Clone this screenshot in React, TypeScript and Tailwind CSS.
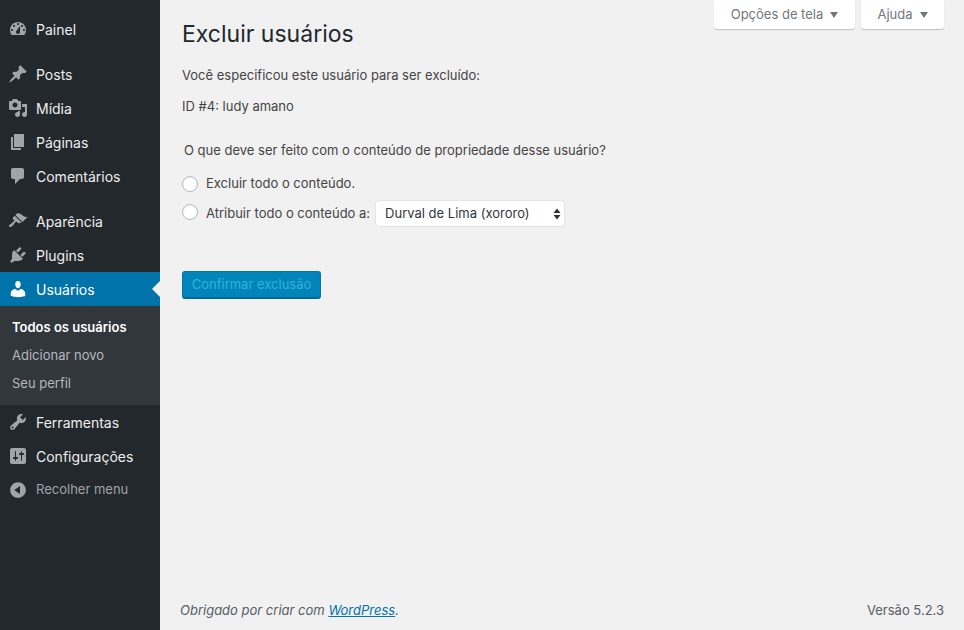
const ICONS: Record<string, string> = {
  dashboard: 'M3.76 16h12.48c1.1-1.37 1.76-3.11 1.76-5 0-4.42-3.58-8-8-8s-8 3.58-8 8c0 1.89.66 3.63 1.76 5zM10 4c.55 0 1 .45 1 1s-.45 1-1 1-1-.45-1-1 .45-1 1-1zM6 6c.55 0 1 .45 1 1s-.45 1-1 1-1-.45-1-1 .45-1 1-1zm8 0c.55 0 1 .45 1 1s-.45 1-1 1-1-.45-1-1 .45-1 1-1zm-5.37 5.55L12 7v6c0 1.1-.9 2-2 2s-2-.9-2-2c0-.57.24-1.08.63-1.45zM4 10c.55 0 1 .45 1 1s-.45 1-1 1-1-.45-1-1 .45-1 1-1zm12 0c.55 0 1 .45 1 1s-.45 1-1 1-1-.45-1-1 .45-1 1-1z',
  post: 'M10.44 3.02l1.82-1.82 6.36 6.35-1.83 1.82c-1.05-.68-2.48-.57-3.41.36l-.75.75c-.92.93-1.04 2.35-.35 3.41l-1.83 1.82-2.41-2.41-2.8 2.79c-.42.42-3.38 2.71-3.8 2.29s1.86-3.39 2.28-3.81l2.79-2.79L4.1 9.36l1.83-1.82c1.05.69 2.48.57 3.4-.36l.75-.75c.93-.92 1.05-2.35.36-3.41z',
  media: 'M13 11V4c0-.55-.45-1-1-1h-1.67L9 1H5L3.67 3H2c-.55 0-1 .45-1 1v7c0 .55.45 1 1 1h10c.55 0 1-.45 1-1zM7 4.5c1.38 0 2.5 1.12 2.5 2.5S8.38 9.5 7 9.5 4.5 8.38 4.5 7 5.62 4.5 7 4.5zM14 6h5v10.5c0 1.38-1.12 2.5-2.5 2.5S14 17.88 14 16.5s1.12-2.5 2.5-2.5c.17 0 .34.02.5.05V9h-3V6zm-4 8.05V13h2v3.5c0 1.38-1.12 2.5-2.5 2.5S7 17.88 7 16.5 8.12 14 9.5 14c.17 0 .34.02.5.05z',
  page: 'M6 15V2h10v13H6zm-1 1h8v2H3V5h2v11z',
  comments: 'M5 2h9c1.1 0 2 .9 2 2v7c0 1.1-.9 2-2 2h-2l-5 5v-5H5c-1.1 0-2-.9-2-2V4c0-1.1.9-2 2-2z',
  appearance: 'M14.48 11.06L7.41 3.99l1.5-1.5c.5-.56 2.3-.47 3.51.32 1.21.8 1.43 1.28 2.91 2.1 1.18.64 2.45 1.26 4.45.85zm-.71.71L6.7 4.7 4.93 6.47c-.39.39-.39 1.02 0 1.41l1.06 1.06c.39.39.39 1.03 0 1.42-.6.6-1.43 1.11-2.21 1.69-.35.26-.7.53-1.01.84C1.43 13.23.4 14.96 1.2 15.76s2.53-.23 3.87-1.57c.31-.31.58-.66.84-1.01.58-.78 1.09-1.61 1.69-2.21.39-.39 1.02-.39 1.41 0l1.06 1.06c.39.39 1.02.39 1.41 0z',
  plugins: 'M13.11 4.36L9.87 7.6 8 5.73l3.24-3.24c.35-.34 1.05-.2 1.56.32.52.51.66 1.21.31 1.55zm-8 1.77l.91-1.12 9.01 9.01-1.19.84c-.71.71-2.63 1.16-3.82 1.16H6.14L4.9 17.26c-.59.59-1.54.59-2.12 0-.59-.58-.59-1.53 0-2.12l1.24-1.24v-3.88c0-1.13.4-3.19 1.09-3.89zm7.26 3.97l3.24-3.24c.34-.35 1.04-.21 1.55.31.52.51.66 1.21.31 1.55l-3.24 3.25z',
  users: 'M10 9.25c-2.27 0-2.73-3.44-2.73-3.44C7 4.02 7.82 2 9.97 2c2.16 0 2.98 2.02 2.71 3.81 0 0-.41 3.44-2.68 3.44zm0 2.57L12.72 10c2.39 0 4.52 2.33 4.52 4.53v2.49s-3.65 1.13-7.24 1.13c-3.65 0-7.24-1.13-7.24-1.13v-2.49c0-2.25 1.94-4.48 4.47-4.48z',
  tools: 'M16.68 9.77c-1.34 1.34-3.3 1.67-4.95.99l-5.41 6.52c-.99.99-2.59.99-3.58 0s-.99-2.59 0-3.57l6.52-5.42c-.68-1.65-.35-3.61.99-4.95 1.28-1.28 3.12-1.62 4.72-1.06l-2.89 2.89 2.82 2.82 2.86-2.87c.53 1.58.18 3.39-1.08 4.65zM3.81 16.21c.4.39 1.04.39 1.43 0 .4-.4.4-1.04 0-1.43-.39-.4-1.03-.4-1.43 0-.39.39-.39 1.03 0 1.43z',
  settings: 'M18 16V4c0-1.1-.9-2-2-2H4c-1.1 0-2 .9-2 2v12c0 1.1.9 2 2 2h12c1.1 0 2-.9 2-2zM8 11h1c.55 0 1 .45 1 1s-.45 1-1 1H8v1.5c0 .28-.22.5-.5.5s-.5-.22-.5-.5V13H6c-.55 0-1-.45-1-1s.45-1 1-1h1V5.5c0-.28.22-.5.5-.5s.5.22.5.5V11zm5-2h-1c-.55 0-1-.45-1-1s.45-1 1-1h1V5.5c0-.28.22-.5.5-.5s.5.22.5.5V7h1c.55 0 1 .45 1 1s-.45 1-1 1h-1v5.5c0 .28-.22.5-.5.5s-.5-.22-.5-.5V9z',
  collapse: 'M10 2.16c4.33 0 7.84 3.51 7.84 7.84s-3.51 7.84-7.84 7.84S2.16 14.33 2.16 10 5.71 2.16 10 2.16zm2 11.72V6.12L6.18 9.97z',
};

function Icon({ name, className }: { name: string; className: string }) {
  return (
    <svg viewBox="0 0 20 20" className={`w-5 h-5 shrink-0 ${className}`} fill="currentColor">
      <path fillRule="evenodd" d={ICONS[name]} />
    </svg>
  );
}

function MenuItem({ icon, label }: { icon: string; label: string }) {
  return (
    <div className="flex items-center h-[34px] pl-2 gap-2 text-[14px] text-[#eeeeee]">
      <Icon name={icon} className="text-[#a0a5aa]" />
      <span>{label}</span>
    </div>
  );
}

function Caret() {
  return <span className="w-0 h-0 border-x-[4px] border-x-transparent border-t-[6px] border-t-[#72777c]" />;
}

export default function App() {
  return (
    <div className="flex w-[964px] h-[630px] overflow-hidden bg-[#f1f1f1] font-['Inter',sans-serif] text-[13px] text-[#444444]">
      <aside className="w-[160px] shrink-0 bg-[#23282d] pt-3">
        <MenuItem icon="dashboard" label="Painel" />
        <div className="h-[11px]" />
        <MenuItem icon="post" label="Posts" />
        <MenuItem icon="media" label="Mídia" />
        <MenuItem icon="page" label="Páginas" />
        <MenuItem icon="comments" label="Comentários" />
        <div className="h-[11px]" />
        <MenuItem icon="appearance" label="Aparência" />
        <MenuItem icon="plugins" label="Plugins" />
        <div className="relative flex items-center h-[34px] pl-2 gap-2 text-[14px] text-white bg-[#0073aa]">
          <Icon name="users" className="text-white" />
          <span>Usuários</span>
          <span className="absolute right-0 top-[9px] w-0 h-0 border-y-[8px] border-y-transparent border-r-[8px] border-r-[#f1f1f1]" />
        </div>
        <div className="bg-[#32373c] pt-[7px] pb-2 pl-3 text-[13px]">
          <div className="h-7 leading-7 font-semibold text-white">Todos os usuários</div>
          <div className="h-7 leading-7 text-[#b4b9be]">Adicionar novo</div>
          <div className="h-7 leading-7 text-[#b4b9be]">Seu perfil</div>
        </div>
        <MenuItem icon="tools" label="Ferramentas" />
        <MenuItem icon="settings" label="Configurações" />
        <div className="flex items-center h-[34px] pl-2 gap-2 text-[13px] text-[#a0a5aa]">
          <Icon name="collapse" className="text-[#a0a5aa]" />
          <span>Recolher menu</span>
        </div>
      </aside>

      <main className="flex-1 flex flex-col min-w-0 pl-[22px] pr-5">
        <div className="flex justify-end gap-[6px] h-0">
          <button className="flex items-center justify-center gap-[7px] w-[141px] h-[29px] shrink-0 bg-white rounded-b-[3px] shadow-[0_1px_1px_rgba(0,0,0,0.2)] text-[#72777c]">
            Opções de tela <Caret />
          </button>
          <button className="flex items-center justify-center gap-[7px] w-[83px] h-[29px] shrink-0 bg-white rounded-b-[3px] shadow-[0_1px_1px_rgba(0,0,0,0.2)] text-[#72777c]">
            Ajuda <Caret />
          </button>
        </div>

        <h1 className="mt-[18px] text-[23px] leading-[32px] text-[#23282d]">Excluir usuários</h1>
        <p className="mt-[15px] leading-[20px]">Você especificou este usuário para ser excluído:</p>
        <p className="mt-[11px] leading-[20px]">ID #4: ludy amano</p>
        <p className="mt-[24px] ml-[2px] leading-[20px]">O que deve ser feito com o conteúdo de propriedade desse usuário?</p>

        <div className="mt-[14px] flex items-center h-5 gap-2">
          <span className="w-4 h-4 rounded-full bg-white border border-[#b4b9be] shadow-[inset_0_1px_2px_rgba(0,0,0,0.07)]" />
          <span>Excluir todo o conteúdo.</span>
        </div>
        <div className="mt-[5px] flex items-center h-[29px] gap-2">
          <span className="w-4 h-4 rounded-full bg-white border border-[#b4b9be] shadow-[inset_0_1px_2px_rgba(0,0,0,0.07)] -mt-1" />
          <span>Atribuir todo o conteúdo a:</span>
          <div className="flex items-center justify-between w-[190px] h-[27px] -ml-[3px] pl-[9px] pr-[3px] bg-white rounded-[4px] border border-[#e4e4e4] text-[#32373c]">
            <span>Durval de Lima (xororo)</span>
            <svg viewBox="0 0 8 12" className="w-2 h-3 text-[#333333]" fill="currentColor">
              <path d="M4 0.5L7.5 5H0.5zM4 11.5L0.5 7H7.5z" />
            </svg>
          </div>
        </div>

        <div className="mt-[43px]">
          <button className="w-[139px] h-[28px] rounded-[3px] bg-[#0085ba] border border-[#0073aa] border-b-2 border-b-[#006799] text-[#33b0dc]">
            Confirmar exclusão
          </button>
        </div>

        <footer className="mt-auto mb-[10px] flex items-center justify-between -ml-[2px] leading-[20px] text-[#555d66]">
          <span className="italic">
            Obrigado por criar com <span className="text-[#0073aa] underline">WordPress</span>.
          </span>
          <span>Versão 5.2.3</span>
        </footer>
      </main>
    </div>
  );
}
